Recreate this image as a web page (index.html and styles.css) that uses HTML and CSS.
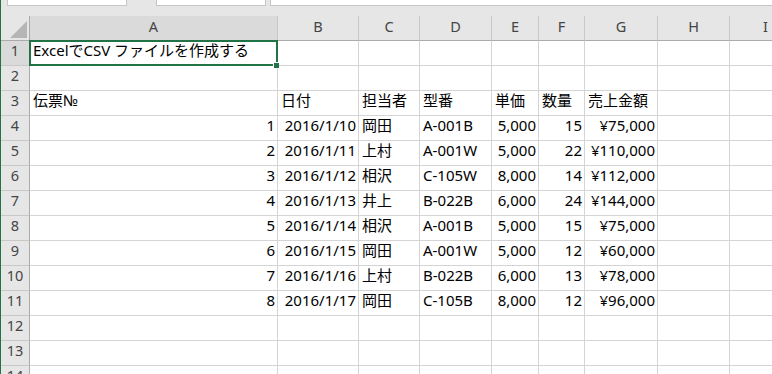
FILE: index.html
```html
<!DOCTYPE html>
<html lang="ja">
<head>
  <meta charset="UTF-8">
  <title>ExcelでCSVファイルを作成する</title>
  <link rel="stylesheet" href="styles.css">
</head>
<body>
  <div class="window">

    <!-- name box / formula bar (only the bottom edge shows) -->
    <div class="formula-strip">
      <div class="box name-box"></div>
      <div class="box cmd-box"></div>
      <div class="box formula-box"></div>
    </div>

    <table class="sheet">
      <colgroup>
        <col class="w-rowhead">
        <col class="w-a">
        <col class="w-b">
        <col class="w-c">
        <col class="w-d">
        <col class="w-e">
        <col class="w-f">
        <col class="w-g">
        <col class="w-h">
        <col class="w-i">
      </colgroup>
      <tr class="colheads">
        <th class="corner"><svg width="17" height="17" viewBox="0 0 17 17"><polygon points="17,0 17,17 0,17" fill="#b5b5b5"/></svg></th>
        <th class="sel">A</th><th>B</th><th>C</th><th>D</th><th>E</th><th>F</th><th>G</th><th>H</th><th>I</th>
      </tr>
      <tr><th class="sel">1</th><td>ExcelでCSV ファイルを作成する</td><td></td><td></td><td></td><td></td><td></td><td></td><td></td><td></td></tr>
      <tr><th>2</th><td></td><td></td><td></td><td></td><td></td><td></td><td></td><td></td><td></td></tr>
      <tr><th>3</th><td>伝票№</td><td>日付</td><td>担当者</td><td>型番</td><td>単価</td><td>数量</td><td>売上金額</td><td></td><td></td></tr>
      <tr><th>4</th><td class="num">1</td><td class="num">2016/1/10</td><td>岡田</td><td>A-001B</td><td class="num">5,000</td><td class="num">15</td><td class="num">¥75,000</td><td></td><td></td></tr>
      <tr><th>5</th><td class="num">2</td><td class="num">2016/1/11</td><td>上村</td><td>A-001W</td><td class="num">5,000</td><td class="num">22</td><td class="num">¥110,000</td><td></td><td></td></tr>
      <tr><th>6</th><td class="num">3</td><td class="num">2016/1/12</td><td>相沢</td><td>C-105W</td><td class="num">8,000</td><td class="num">14</td><td class="num">¥112,000</td><td></td><td></td></tr>
      <tr><th>7</th><td class="num">4</td><td class="num">2016/1/13</td><td>井上</td><td>B-022B</td><td class="num">6,000</td><td class="num">24</td><td class="num">¥144,000</td><td></td><td></td></tr>
      <tr><th>8</th><td class="num">5</td><td class="num">2016/1/14</td><td>相沢</td><td>A-001B</td><td class="num">5,000</td><td class="num">15</td><td class="num">¥75,000</td><td></td><td></td></tr>
      <tr><th>9</th><td class="num">6</td><td class="num">2016/1/15</td><td>岡田</td><td>A-001W</td><td class="num">5,000</td><td class="num">12</td><td class="num">¥60,000</td><td></td><td></td></tr>
      <tr><th>10</th><td class="num">7</td><td class="num">2016/1/16</td><td>上村</td><td>B-022B</td><td class="num">6,000</td><td class="num">13</td><td class="num">¥78,000</td><td></td><td></td></tr>
      <tr><th>11</th><td class="num">8</td><td class="num">2016/1/17</td><td>岡田</td><td>C-105B</td><td class="num">8,000</td><td class="num">12</td><td class="num">¥96,000</td><td></td><td></td></tr>
      <tr><th>12</th><td></td><td></td><td></td><td></td><td></td><td></td><td></td><td></td><td></td></tr>
      <tr><th>13</th><td></td><td></td><td></td><td></td><td></td><td></td><td></td><td></td><td></td></tr>
      <tr><th>14</th><td></td><td></td><td></td><td></td><td></td><td></td><td></td><td></td><td></td></tr>
    </table>

    <!-- active cell A1 -->
    <div class="selection"><span class="handle"></span></div>
  </div>
</body>
</html>
```

FILE: styles.css
```css
body {
  margin: 0;
  background: #fff;
  font-family: 'Noto Sans', 'Noto Sans CJK JP', sans-serif;
}

.window {
  position: relative;
  height: 374px;
  overflow: hidden;
  border-left: 1px solid #217346;
  background: #fff;
}

/* Formula bar strip */
.formula-strip {
  display: flex;
  align-items: flex-start;
  height: 16px;
  padding-left: 6px;
  background: #e6e6e6;
}

.box {
  height: 5px;
  background: #fff;
  border: 1px solid #c6c6c6;
  border-top: none;
}

.name-box {
  width: 118px;
}

.cmd-box {
  width: 108px;
  margin-left: 29px;
}

.formula-box {
  flex: 1;
  margin-left: 4px;
  border-right: none;
}

/* Grid: every row is 24px + 1px gridline */
.sheet {
  border-collapse: separate;
  border-spacing: 0;
  table-layout: fixed;
  width: 801px;
}

.w-rowhead { width: 29px; }
.w-a { width: 248px; }
.w-b { width: 81px; }
.w-c { width: 61px; }
.w-d { width: 72px; }
.w-e { width: 47px; }
.w-f { width: 46px; }
.w-g { width: 73px; }
.w-h { width: 72px; }
.w-i { width: 72px; }

.sheet td,
.sheet th {
  height: 18px;
  padding: 0 2px 6px 3px;
  line-height: 18px;
  white-space: nowrap;
  overflow: hidden;
  border-right: 1px solid #d4d4d4;
  border-bottom: 1px solid #d4d4d4;
}

.sheet td {
  font-size: 15px;
  color: #000;
  text-align: left;
}

.sheet td.num {
  text-align: right;
}

/* Column and row headers */
.sheet th {
  padding: 0 0 6px;
  font-size: 14.5px;
  font-weight: normal;
  color: #444;
  text-align: center;
  background: #e6e6e6;
  border-right-color: #c8c8c8;
  border-bottom-color: #c8c8c8;
}

.colheads th {
  height: 20px;
  padding-bottom: 4px;
  line-height: 20px;
  border-bottom-color: #ababab;
}

.sheet tr > th:first-child {
  border-right-color: #ababab;
}

.sheet th.sel {
  background: #dadada;
}

.sheet .colheads th.corner {
  height: 22px;
  padding: 0 2px 2px 0;
  line-height: 0;
  text-align: right;
  vertical-align: bottom;
}

.corner svg {
  display: inline-block;
}

/* Active cell outline */
.selection {
  position: absolute;
  left: 28px;
  top: 40px;
  width: 249px;
  height: 26px;
  box-sizing: border-box;
  border: 2px solid #217346;
}

.handle {
  position: absolute;
  left: 242px;
  top: 20px;
  width: 5px;
  height: 5px;
  background: #217346;
  border: 1px solid #fff;
  border-right: none;
  border-bottom: none;
}
```
